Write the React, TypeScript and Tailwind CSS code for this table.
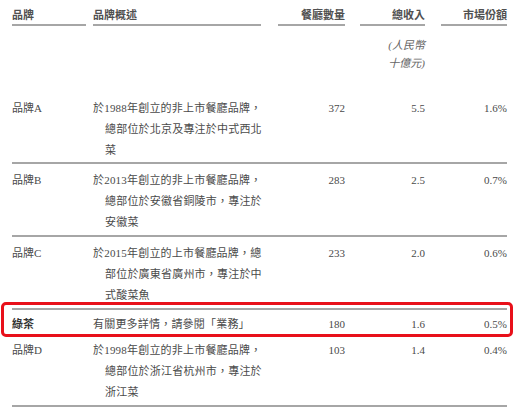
const rows = [
  {
    brand: "品牌A",
    lines: ["於1988年創立的非上市餐廳品牌，", "總部位於北京及專注於中式西北", "菜"],
    count: "372",
    revenue: "5.5",
    share: "1.6%",
    pad: "pt-[26px] pb-[1px]",
  },
  {
    brand: "品牌B",
    lines: ["於2013年創立的非上市餐廳品牌，", "總部位於安徽省銅陵市，專注於", "安徽菜"],
    count: "283",
    revenue: "2.5",
    share: "0.7%",
    pad: "pt-[6px] pb-[2px]",
  },
  {
    brand: "品牌C",
    lines: ["於2015年創立的上市餐廳品牌，總", "部位於廣東省廣州市，專注於中", "式酸菜魚"],
    count: "233",
    revenue: "2.0",
    share: "0.6%",
    pad: "pt-[6px] pb-[2px]",
  },
  {
    brand: "綠茶",
    lines: ["有關更多詳情，請參閱「業務」"],
    count: "180",
    revenue: "1.6",
    share: "0.5%",
    pad: "pt-[4px] pb-0",
    highlight: true,
  },
  {
    brand: "品牌D",
    lines: ["於1998年創立的非上市餐廳品牌，", "總部位於浙江省杭州市，專注於", "浙江菜"],
    count: "103",
    revenue: "1.4",
    share: "0.4%",
    pad: "pt-[3px] pb-[2px]",
  },
];

const cols = "grid grid-cols-[81px_185px_82px_81px_66px]";

export default function App() {
  return (
    <div className="w-[516px] h-[410px] bg-white pl-[12px] pr-[9px] overflow-hidden font-['Liberation_Serif','Noto_Sans_CJK_TC',serif] text-[#4a4a4a]">
      {/* header */}
      <div className={`${cols} items-start text-[11px] font-bold font-['Liberation_Sans','Noto_Sans_CJK_TC',sans-serif] text-[#505050]`}>
        <div className="mr-[7px] border-b-2 border-[#a6a6a6] pt-[8px] pb-[2px] leading-[14px]">品牌</div>
        <div className="mr-[17px] border-b-2 border-[#a6a6a6] pt-[8px] pb-[2px] leading-[14px]">品牌概述</div>
        <div className="mr-[15px] border-b-2 border-[#a6a6a6] pt-[8px] pb-[2px] leading-[14px] text-right">餐廳數量</div>
        <div className="mr-[16px] flex flex-col">
          <div className="border-b-2 border-[#a6a6a6] pt-[8px] pb-[2px] leading-[14px] text-right">總收入</div>
          <div className="mt-[10px] text-right font-normal italic leading-[18px] text-[#666] font-['Liberation_Serif','Noto_Sans_CJK_TC',serif]">
            <div>(人民幣</div>
            <div>十億元)</div>
          </div>
        </div>
        <div className="border-b-2 border-[#a6a6a6] pt-[8px] pb-[2px] leading-[14px] text-right">市場份額</div>
      </div>

      {/* body */}
      {rows.map((r) => (
        <div
          key={r.brand}
          className={`${cols} relative border-b-2 border-[#a6a6a6] text-[11px] leading-[21px] ${r.pad}`}
        >
          {r.highlight && (
            <div className="absolute -left-[11px] -right-[6px] -top-[8px] -bottom-[2px] rounded-[5px] border-[3px] border-[#e8101a]" />
          )}
          <div className={r.highlight ? "font-bold text-[#333] font-['Liberation_Sans','Noto_Sans_CJK_TC',sans-serif]" : ""}>
            {r.brand}
          </div>
          <div className="tracking-[0.2px]">
            {r.lines.map((l, i) => (
              <div key={i} className={`whitespace-nowrap ${i > 0 ? "pl-[12px]" : ""}`}>
                {l}
              </div>
            ))}
          </div>
          <div className="pr-[15px] text-right">{r.count}</div>
          <div className="pr-[16px] text-right">{r.revenue}</div>
          <div className="text-right">{r.share}</div>
        </div>
      ))}
    </div>
  );
}
